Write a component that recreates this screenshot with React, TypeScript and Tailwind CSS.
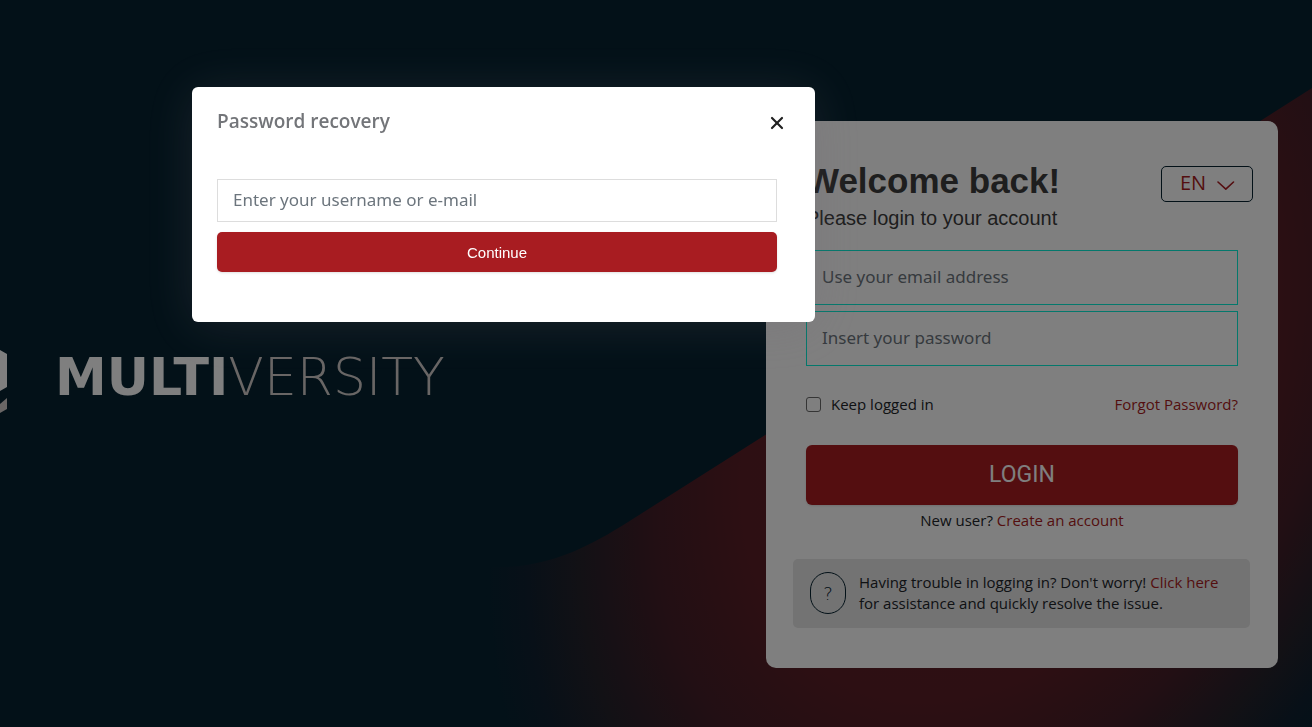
import React from "react";
import { X } from "lucide-react";

function Backdrop() {
  return (
    <svg
      className="absolute inset-0 h-full w-full"
      viewBox="0 0 1312 727"
      preserveAspectRatio="xMaxYMax slice"
      aria-hidden="true"
    >
      <defs>
        <radialGradient
          id="glow"
          gradientUnits="userSpaceOnUse"
          cx="0"
          cy="0"
          r="1"
          gradientTransform="translate(1003 390) rotate(-60) scale(660 460)"
        >
          <stop offset="0" stopColor="#5e1f27" />
          <stop offset="0.5" stopColor="#5b1f26" />
          <stop offset="0.67" stopColor="#451e28" />
          <stop offset="0.82" stopColor="#25222b" />
          <stop offset="0.92" stopColor="#102130" />
          <stop offset="1" stopColor="#062230" />
        </radialGradient>
      </defs>
      <path d="M1312 88 L628 522 C590 546 550 567 500 567 L440 567 V727 H1312 Z" fill="url(#glow)" />
    </svg>
  );
}

function Logo() {
  return (
    <div className="mt-[341px] flex items-center gap-12">
      <svg width="7" height="72" viewBox="0 0 7 72" aria-hidden="true">
        <path d="M0 9 L7 13 V46 L0 50 Z" fill="#fff" />
        <path d="M0 63 L7 57 V68 L0 72 Z" fill="#d2cdcb" />
      </svg>
      <p className="font-['DejaVu_Sans'] text-[52px] leading-[56px] whitespace-nowrap">
        <span className="font-bold text-white">MULTI</span>
        <span className="font-extralight text-[#d2cdcb]">VERSITY</span>
      </p>
    </div>
  );
}

function LoginCard() {
  const field =
    "block h-[55px] w-full border border-[#08f0d8] px-[15px] pb-0.5 font-['Noto_Sans'] text-[17px] placeholder:text-[#6c757d] outline-none";

  return (
    <section className="mt-[121px] w-[512px] shrink-0 rounded-[10px] bg-white px-10 pt-10 pb-10 text-[15px] leading-[21px] text-[#212529]">
      <div className="flex items-start justify-between">
        <div className="font-['Liberation_Sans']">
          <h1 className="text-[35px] leading-10 font-bold whitespace-nowrap text-[#3c3c3c]">Welcome back!</h1>
          <p className="text-[20px] leading-[34px] text-[#3c3c3c]">Please login to your account</p>
        </div>
        <div className="relative mt-[5px] -mr-[15px]">
          <select
            aria-label="Language"
            className="h-9 w-[92px] appearance-none rounded-[5px] border border-[#062230] pb-0.5 pl-[18px] text-[20px] leading-6 text-[#a81c21]"
          >
            <option>EN</option>
            <option>IT</option>
          </select>
          <svg
            className="pointer-events-none absolute top-3.5 right-[18px] text-[#a81c21]"
            width="18"
            height="11"
            viewBox="0 0 18 11"
            fill="none"
            stroke="currentColor"
            strokeWidth="1.6"
            strokeLinecap="round"
            strokeLinejoin="round"
            aria-hidden="true"
          >
            <path d="M1 2 L8.8 9.2 L16.5 2" />
          </svg>
        </div>
      </div>

      <form className="mt-[15px]" onSubmit={(e) => e.preventDefault()}>
        <div className="flex flex-col gap-1.5">
          <input type="email" aria-label="Email" placeholder="Use your email address" className={field} />
          <input type="password" aria-label="Password" placeholder="Insert your password" className={field} />
        </div>

        <div className="mt-7 flex items-center justify-between">
          <label className="flex items-center gap-2.5">
            <input
              type="checkbox"
              className="h-[15px] w-[15px] appearance-none rounded-[3px] border border-[#6a6a6a]"
            />
            Keep logged in
          </label>
          <a href="#forgot" className="text-[#a81c21]">
            Forgot Password?
          </a>
        </div>

        <button
          type="submit"
          className="mt-[30px] h-[60px] w-full rounded-md bg-[#a81c21] pb-0.5 font-['Roboto'] text-[23px] text-white shadow-sm"
        >
          LOGIN
        </button>
      </form>

      <p className="mt-[5px] text-center">
        New user?{" "}
        <a href="#register" className="text-[#a81c21]">
          Create an account
        </a>
      </p>

      <div className="mt-7 -mr-3 -ml-[13px] flex items-center gap-[13px] rounded-[5px] bg-[#e6e6e6] px-4 pt-[13px] pb-3.5">
        <span className="ml-px flex h-[42px] w-9 shrink-0 items-center justify-center rounded-[18px] border border-[#062230] font-['DejaVu_Sans'] text-[18px] font-extralight text-[#062230]">
          ?
        </span>
        <p>
          Having trouble in logging in? Don't worry!{" "}
          <a href="#help" className="text-[#a81c21]">
            Click here
          </a>
          <br />
          for assistance and quickly resolve the issue.
        </p>
      </div>
    </section>
  );
}

function RecoveryModal() {
  return (
    <div className="fixed inset-0 flex items-start bg-black/50 pt-[87px] pl-48">
      <div
        role="dialog"
        aria-label="Password recovery"
        className="w-[623px] rounded-md bg-white pt-[22px] pr-[38px] pb-[50px] pl-[25px] shadow-[0_4px_50px_rgba(110,100,115,0.22)]"
      >
        <div className="flex items-center justify-between">
          <h2 className="text-[19px] leading-6 font-semibold text-[#737579]">Password recovery</h2>
          <button type="button" aria-label="Close" className="-mr-2.5 pt-1 text-[#212121]">
            <X className="h-5 w-5" strokeWidth={2.6} />
          </button>
        </div>
        <form className="mt-[46px] flex flex-col gap-2.5" onSubmit={(e) => e.preventDefault()}>
          <input
            type="text"
            aria-label="Username or e-mail"
            placeholder="Enter your username or e-mail"
            className="h-[43px] border border-[#dddddd] px-[15px] pb-0.5 font-['Noto_Sans'] text-[17px] outline-none placeholder:text-[#6c757d]"
          />
          <button
            type="submit"
            className="h-10 rounded-[5px] bg-[#a81c21] pt-0.5 font-['Liberation_Sans'] text-[15px] text-white shadow-sm"
          >
            Continue
          </button>
        </form>
      </div>
    </div>
  );
}

export default function App() {
  return (
    <div className="relative min-h-screen overflow-hidden bg-[#062230] font-['Open_Sans',sans-serif]">
      <Backdrop />
      <main className="relative flex items-start justify-between pr-[34px] pb-[59px]">
        <Logo />
        <LoginCard />
      </main>
      <RecoveryModal />
    </div>
  );
}
